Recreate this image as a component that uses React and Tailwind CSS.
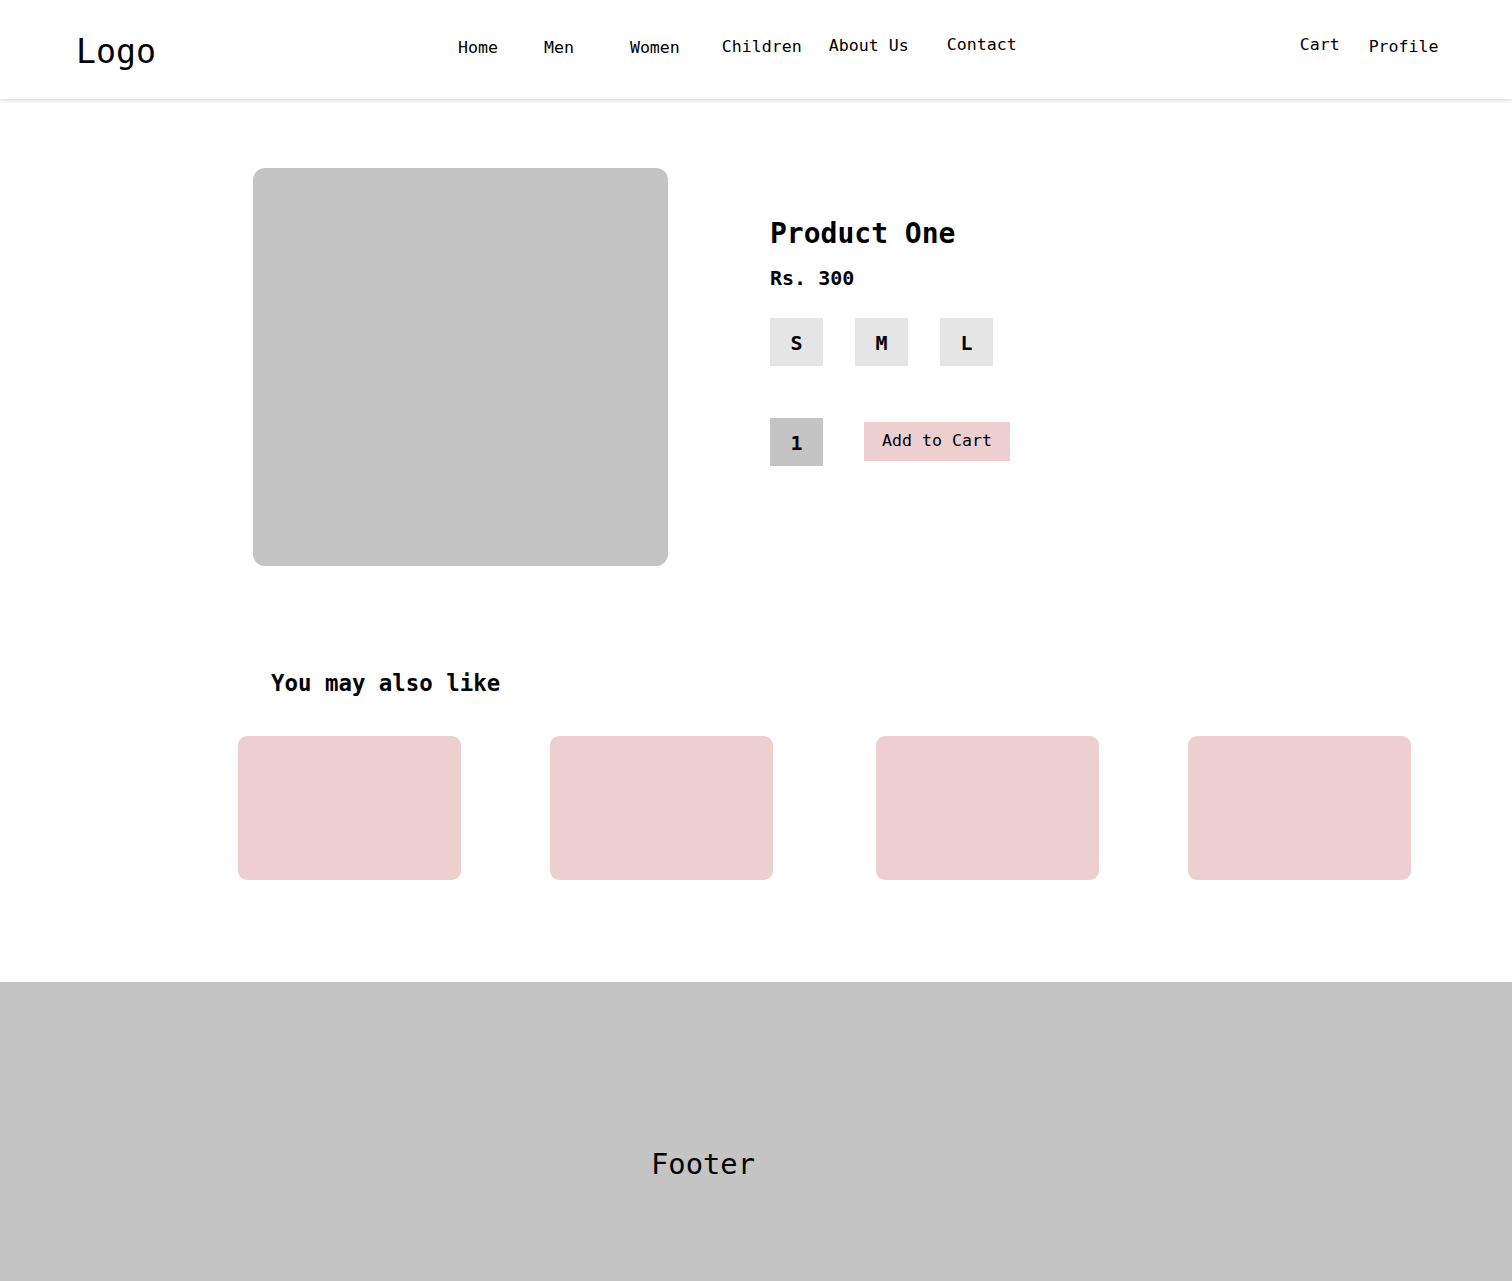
import React from "react";

const mono = { fontFamily: '"DejaVu Sans Mono", "Liberation Mono", monospace' };

function Header() {
  return (
    <header className="flex items-start h-[99px] bg-white shadow-[0_2px_4px_rgba(0,0,0,0.12)] relative z-10">
      <div className="ml-[76px] mt-[32px] text-[33.2px] leading-[40px]">Logo</div>
      <nav className="flex items-start text-[16.6px] leading-[20px]">
        <a className="ml-[302px] mt-[38px]">Home</a>
        <a className="ml-[46px] mt-[38px]">Men</a>
        <a className="ml-[56px] mt-[38px]">Women</a>
        <a className="ml-[42px] mt-[37px]">Children</a>
        <a className="ml-[27px] mt-[36px]">About Us</a>
        <a className="ml-[38px] mt-[35px]">Contact</a>
      </nav>
      <div className="flex items-start text-[16.6px] leading-[20px]">
        <a className="ml-[283px] mt-[35px]">Cart</a>
        <a className="ml-[29px] mt-[37px]">Profile</a>
      </div>
    </header>
  );
}

function ProductDetail() {
  const sizes = ["S", "M", "L"];
  return (
    <section className="flex pt-[69px]">
      <div className="ml-[253px] w-[415px] h-[398px] rounded-[12px] bg-[#c4c4c4]" />
      <div className="ml-[102px] flex flex-col">
        <h1 className="mt-[49px] text-[28px] leading-[34px] font-bold">Product One</h1>
        <p className="mt-[15px] text-[20px] leading-[24px] font-bold">Rs. 300</p>
        <div className="mt-[28px] flex gap-[32px]">
          {sizes.map((s) => (
            <button
              key={s}
              className="w-[53px] h-[48px] pt-[2px] bg-[#e5e5e5] flex items-center justify-center text-[20px] font-bold"
            >
              {s}
            </button>
          ))}
        </div>
        <div className="mt-[52px] flex items-start">
          <div className="w-[53px] h-[48px] pt-[2px] bg-[#c4c4c4] flex items-center justify-center text-[20px] font-bold">
            1
          </div>
          <button className="ml-[41px] mt-[4px] w-[146px] h-[39px] bg-[#eecfd0] flex items-center justify-center text-[16.6px]">
            Add to Cart
          </button>
        </div>
      </div>
    </section>
  );
}

function Related() {
  return (
    <section className="mt-[103px]">
      <h2 className="ml-[271px] text-[22.4px] leading-[28px] font-bold">You may also like</h2>
      <div className="mt-[39px] flex">
        <div className="ml-[238px] w-[223px] h-[144px] rounded-[9px] bg-[#eecfd0]" />
        <div className="ml-[89px] w-[223px] h-[144px] rounded-[9px] bg-[#eecfd0]" />
        <div className="ml-[103px] w-[223px] h-[144px] rounded-[9px] bg-[#eecfd0]" />
        <div className="ml-[89px] w-[223px] h-[144px] rounded-[9px] bg-[#eecfd0]" />
      </div>
    </section>
  );
}

function Footer() {
  return (
    <footer className="mt-[102px] h-[299px] bg-[#c4c4c4] pt-[164px]">
      <p className="ml-[651px] text-[28.8px] leading-[36px]">Footer</p>
    </footer>
  );
}

export default function App() {
  return (
    <div className="min-h-[1281px] bg-white text-black overflow-hidden" style={mono}>
      <Header />
      <ProductDetail />
      <Related />
      <Footer />
    </div>
  );
}
